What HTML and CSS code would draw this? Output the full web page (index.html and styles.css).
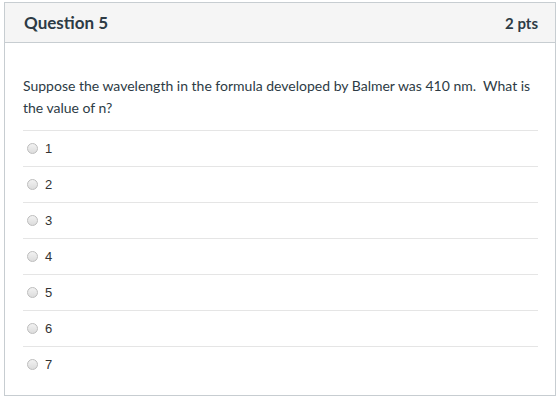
FILE: index.html
```html
<!DOCTYPE html>
<html>
<head>
    <title>Question 5</title>
    <link rel="stylesheet" href="styles.css">
</head>
<body>
<div class="question">
    <div class="header">
        <span class="qname">Question 5</span>
        <span class="pts">2 pts</span>
    </div>
    <div class="content">
        <p class="qtext">Suppose the wavelength in the formula developed by Balmer was 410 nm.&nbsp; What is the value of n?</p>
        <div class="answers">
            <label class="answer"><span class="radio"></span>1</label>
            <label class="answer"><span class="radio"></span>2</label>
            <label class="answer"><span class="radio"></span>3</label>
            <label class="answer"><span class="radio"></span>4</label>
            <label class="answer"><span class="radio"></span>5</label>
            <label class="answer"><span class="radio"></span>6</label>
            <label class="answer"><span class="radio"></span>7</label>
        </div>
    </div>
</div>
</body>
</html>
```

FILE: styles.css
```css
html
{
    background: #fff;
}

body
{
    margin: 0;
    padding: 2px 4px;
    font-family: Lato, "Open Sans", sans-serif;
    color: #2d3b45;
}

.question
{
    border: 1px solid #c7cdd1;
    height: 394px;
    box-sizing: border-box;
}

.header
{
    display: flex;
    justify-content: space-between;
    align-items: center;
    height: 39px;
    padding: 0 17px 0 19px;
    background: #f5f5f5;
    border-bottom: 1px solid #c7cdd1;
    font-weight: bold;
}

.qname
{
    font-size: 17px;
}

.pts
{
    font-size: 15px;
}

.content
{
    padding: 0 17px 0 18px;
}

.qtext
{
    margin: 0;
    padding: 32px 0 11px;
    font-size: 14px;
    line-height: 22px;
}

.answer
{
    display: flex;
    align-items: center;
    height: 35px;
    border-top: 1px solid #e5e5e5;
    font-family: "Liberation Sans", Arial, sans-serif;
    font-size: 13px;
    color: #333;
}

.radio
{
    width: 9px;
    height: 9px;
    margin: 0 7px 0 4px;
    border: 1px solid #bdbdbd;
    border-radius: 50%;
    background: linear-gradient(#f2f2f2, #dcdcdc);
}
```
